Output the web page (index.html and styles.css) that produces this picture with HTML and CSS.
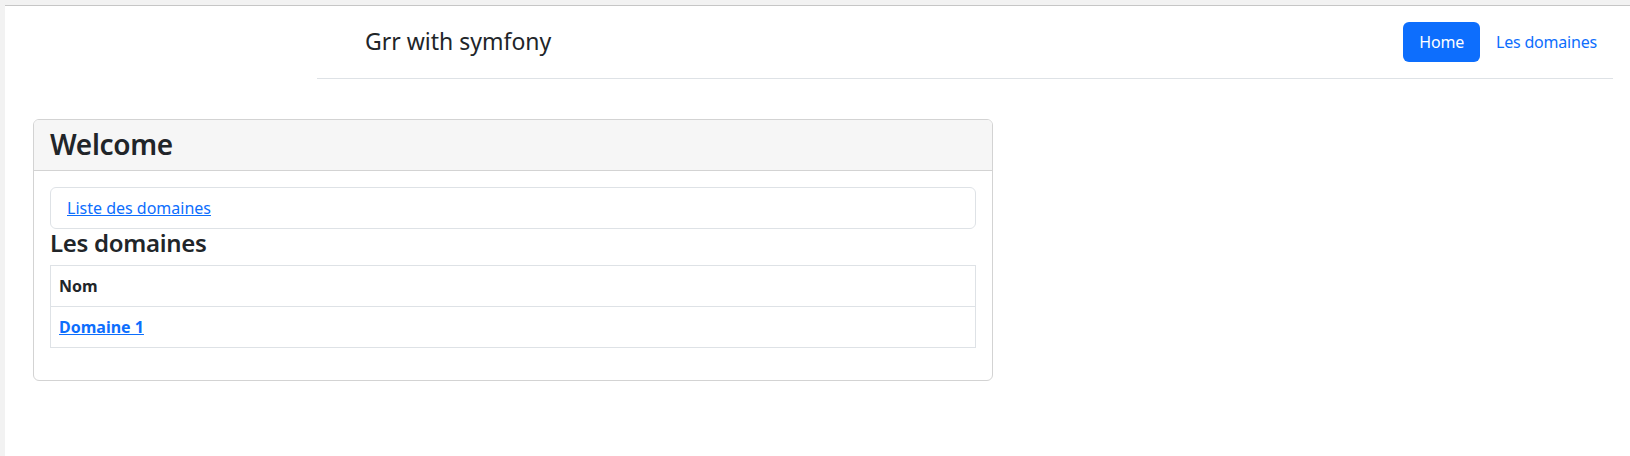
FILE: index.html
```html
<!DOCTYPE html>
<html lang="fr">
<head>
<meta charset="utf-8">
<title>Grr with symfony</title>
<link rel="stylesheet" href="styles.css">
</head>
<body>
<div class="frame">
  <div class="page">
    <div class="header-wrap">
      <header class="site-header">
        <a class="brand" href="#">
          <span class="brand-icon"></span>
          <span class="brand-text">Grr with symfony</span>
        </a>
        <ul class="nav">
          <li><a class="nav-link active" href="#">Home</a></li>
          <li><a class="nav-link" href="#">Les domaines</a></li>
        </ul>
      </header>
    </div>
    <main class="main">
      <div class="card">
        <div class="card-header">
          <h3 class="card-title">Welcome</h3>
        </div>
        <div class="card-body">
          <div class="list-box">
            <a class="list-link" href="#">Liste des domaines</a>
          </div>
          <h4 class="section-title">Les domaines</h4>
          <table class="table">
            <thead>
              <tr><th>Nom</th></tr>
            </thead>
            <tbody>
              <tr><td><a class="row-link" href="#">Domaine 1</a></td></tr>
            </tbody>
          </table>
        </div>
      </div>
    </main>
  </div>
</div>
</body>
</html>
```

FILE: styles.css
```css
* { box-sizing: border-box; }

html, body {
  margin: 0;
  padding: 0;
}

body {
  background: #f2f2f2;
  font-family: "Noto Sans", "Open Sans", sans-serif;
  font-size: 16px;
  line-height: 1.5;
  color: #212529;
  min-height: 456px;
}

.frame {
  padding-top: 5px;
}

.page {
  border-top: 1px solid #c6c6c6;
  background: #ffffff;
  margin-left: 5px;
  min-height: 451px;
}

.header-wrap {
  padding-left: 312px;
  padding-right: 17px;
}

.site-header {
  display: flex;
  align-items: center;
  padding: 16px 0;
  border-bottom: 1px solid #dee2e6;
}

.brand {
  display: flex;
  align-items: center;
  margin-right: auto;
  text-decoration: none;
  color: #212529;
}

.brand-icon {
  display: inline-block;
  width: 40px;
  height: 32px;
  margin-right: 8px;
}

.brand-text {
  font-size: 23px;
  line-height: 1.2;
}

.nav {
  display: flex;
  list-style: none;
  margin: 0;
  padding: 0;
}

.nav-link {
  display: block;
  padding: 8px 16px;
  color: #0d6efd;
  text-decoration: none;
  border-radius: 6px;
  line-height: 24px;
  letter-spacing: -0.2px;
}

.nav-link.active {
  background: #0d6efd;
  color: #ffffff;
}

.main {
  padding: 40px 0 0 28px;
}

.card {
  width: 960px;
  border: 1px solid #d3d3d3;
  border-radius: 6px;
  background: #fff;
  overflow: hidden;
}

.card-header {
  background: #f6f6f6;
  border-bottom: 1px solid #d3d3d3;
  padding: 8px 16px;
}

.card-title {
  margin: 0;
  font-size: 28px;
  font-weight: 600;
  line-height: 33.6px;
  letter-spacing: -0.3px;
}

.card-body {
  padding: 16px;
}

.list-box {
  border: 1px solid #dee2e6;
  border-radius: 6px;
  padding: 8px 16px;
  line-height: 24px;
}

.list-link {
  color: #0d6efd;
  text-decoration: underline;
}

.section-title {
  margin: 0 0 8px;
  font-size: 24px;
  font-weight: 600;
  line-height: 28.8px;
  letter-spacing: -0.3px;
}

.table {
  width: 100%;
  border-collapse: collapse;
  margin-bottom: 16px;
}

.table th,
.table td {
  border: 1px solid #dee2e6;
  padding: 8px;
  text-align: left;
  line-height: 24px;
}

.table th {
  font-weight: 700;
}

.row-link {
  color: #0d6efd;
  font-weight: 700;
  text-decoration: underline;
}
```
